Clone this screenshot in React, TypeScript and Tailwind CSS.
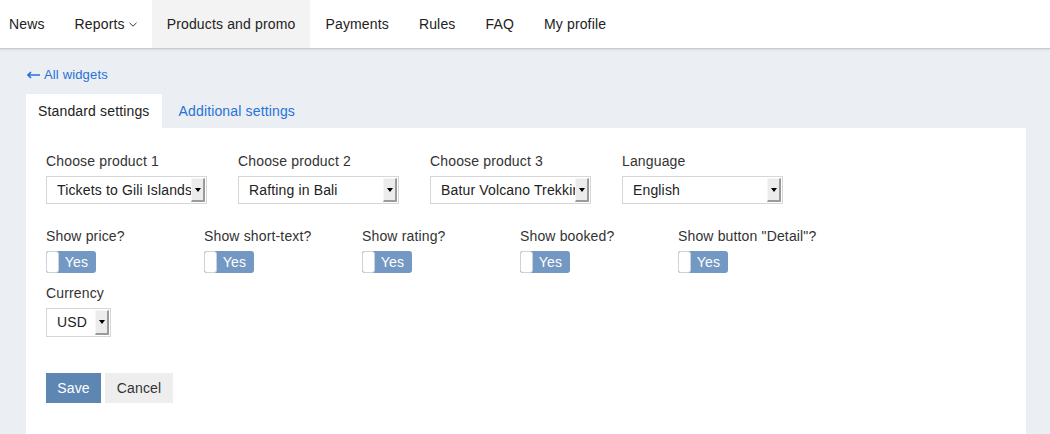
import React from "react";

const navItems = ["News", "Reports", "Products and promo", "Payments", "Rules", "FAQ", "My profile"];

function Select({ value, width }: { value: string; width: string }) {
  return (
    <div className={`flex items-stretch h-full border border-[#d6d6d6] bg-white ${width}`}>
      <div className="flex-1 overflow-hidden whitespace-nowrap pl-[10px] flex items-center text-[14px] text-[#222]">
        {value}
      </div>
      <div className="my-[1px] mr-[1px] w-[14px] flex items-center justify-center bg-[#ececec] border-l border-t border-[#f6f6f6] border-r-2 border-b-2 border-r-[#9a9a9a] border-b-[#9a9a9a]">
        <div className="w-0 h-0 border-l-[3px] border-r-[3px] border-t-[4px] border-l-transparent border-r-transparent border-t-black" />
      </div>
    </div>
  );
}

function Toggle() {
  return (
    <div className="relative flex h-[22px] w-[50px] rounded-[3px] bg-[#7398c3]">
      <div className="w-[13px] h-full rounded-[3px] bg-white border border-[#cdd3da]" />
      <div className="flex-1 flex items-center justify-center pr-[2px] text-[14px] text-white">Yes</div>
    </div>
  );
}

export default function App() {
  const products = [
    { label: "Choose product 1", value: "Tickets to Gili Islands" },
    { label: "Choose product 2", value: "Rafting in Bali" },
    { label: "Choose product 3", value: "Batur Volcano Trekking" },
    { label: "Language", value: "English" },
  ];
  const toggles = ["Show price?", "Show short-text?", "Show rating?", "Show booked?", 'Show button "Detail"?'];

  return (
    <div
      className="min-h-screen bg-[#ebeef3] text-[#333] tracking-[0.15px]"
      style={{ fontFamily: '"Liberation Sans", Arial, sans-serif' }}
    >
      {/* top nav */}
      <nav className="h-[49px] bg-white border-b border-[#c9c9c9] shadow-[0_1px_2px_rgba(0,0,0,0.08)] flex items-stretch">
        {navItems.map((item, i) => (
          <div
            key={item}
            className={`flex items-center text-[14px] text-[#222] ${i === 0 ? "pl-[9px] pr-[15px]" : "px-[15px]"} ${
              item === "Products and promo" ? "bg-[#f3f3f3]" : ""
            }`}
          >
            {item}
            {item === "Reports" && (
              <svg className="ml-[4px] mt-[1px]" width="8" height="5" viewBox="0 0 8 5" fill="none">
                <path d="M0.5 0.8 L4 4.2 L7.5 0.8" stroke="#333" strokeWidth="1" />
              </svg>
            )}
          </div>
        ))}
      </nav>

      <div className="pl-[26px] pt-[18px]">
        <a className="flex items-center text-[13px] leading-[16px] text-[#2573d8] ml-[1px]">
          <svg width="14" height="8" viewBox="0 0 14 8" className="mr-[3px]">
            <path d="M1 4 H13 M4 1 L1 4 L4 7" stroke="#2573d8" strokeWidth="1.6" fill="none" />
          </svg>
          All widgets
        </a>

        {/* tabs */}
        <div className="mt-[11px] flex h-[34px]">
          <div className="bg-white px-[12px] flex items-center text-[14px] text-[#222]">Standard settings</div>
          <div className="px-[17px] flex items-center text-[14px] text-[#2573d8]">Additional settings</div>
        </div>

        {/* panel */}
        <div className="w-[1000px] bg-white pl-[20px] pt-[23px] pb-[40px]">
          <div className="flex gap-[31px]">
            {products.map((p) => (
              <div key={p.label} className="w-[161px]">
                <div className="text-[14px] leading-[20px] text-[#333]">{p.label}</div>
                <div className="mt-[5px] h-[28px]">
                  <Select value={p.value} width="w-[161px]" />
                </div>
              </div>
            ))}
          </div>

          <div className="mt-[22px] flex">
            {toggles.map((t) => (
              <div key={t} className="w-[158px]">
                <div className="text-[14px] leading-[20px] text-[#333] whitespace-nowrap">{t}</div>
                <div className="mt-[5px]">
                  <Toggle />
                </div>
              </div>
            ))}
          </div>

          <div className="mt-[10px]">
            <div className="text-[14px] leading-[20px] text-[#333]">Currency</div>
            <div className="mt-[5px] h-[29px]">
              <Select value="USD" width="w-[65px]" />
            </div>
          </div>

          <div className="mt-[36px] flex gap-[4px]">
            <button className="h-[30px] w-[55px] bg-[#5e86b2] text-white text-[14px]">Save</button>
            <button className="h-[30px] w-[68px] bg-[#eeeeee] text-[#333] text-[14px]">Cancel</button>
          </div>
        </div>
      </div>
    </div>
  );
}
